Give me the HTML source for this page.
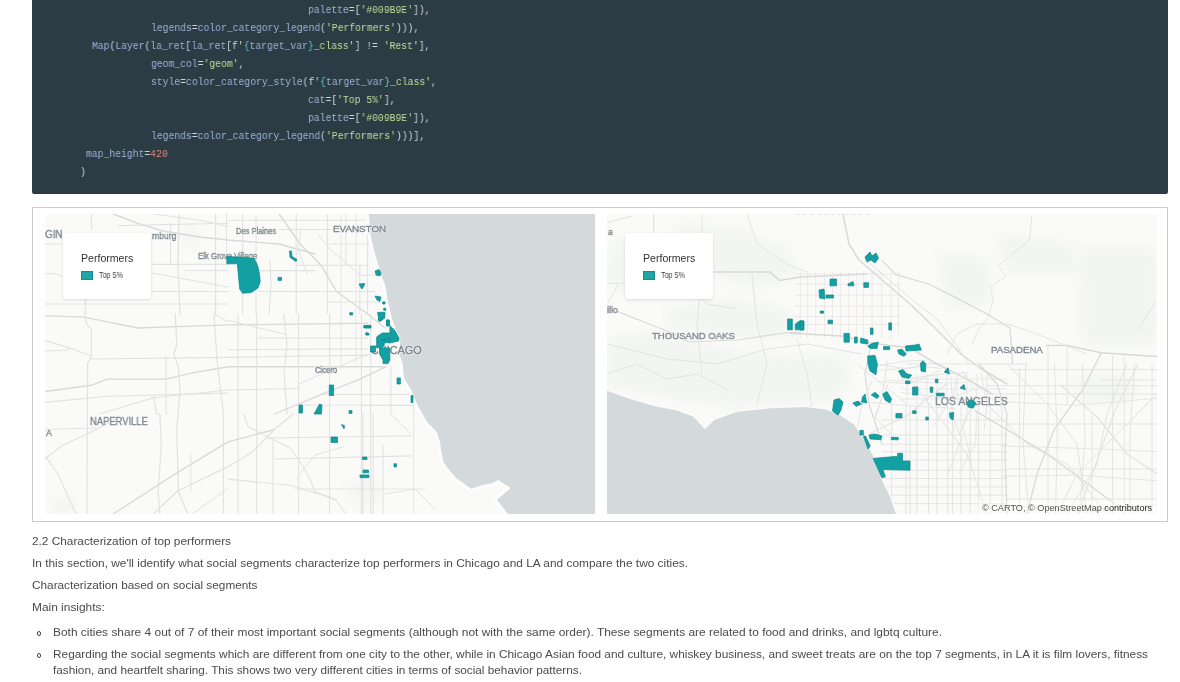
<!DOCTYPE html><html><head><meta charset="utf-8"><style>
html,body{margin:0;padding:0;background:#fff;width:1180px;height:682px;overflow:hidden;position:relative}
.code{position:absolute;left:32px;top:-10px;width:1136px;height:204px;background:#2c3c44;border-radius:0 0 2px 2px}
.cl{position:absolute;font-family:"Liberation Mono",monospace;font-size:10.5px;white-space:pre;color:#9db1d8;line-height:18px;will-change:transform;transform:scaleX(0.9255);transform-origin:0 0;margin-left:0.5px;margin-top:-0.3px}
.s{color:#c2dc98}.p{color:#cfd6dc}.b{color:#5fc7c0}.n{color:#e4877a}
.frame{position:absolute;left:32px;top:207px;width:1134px;height:313px;border:1px solid #cbcbcb}
.map{position:absolute;top:214px;width:550px;height:300px;overflow:hidden;background:#f6f7f5}
.map svg{display:block}
.ti{position:absolute;white-space:pre;line-height:1;transform-origin:0 0;will-change:transform}
.leg{position:absolute;background:#fff;border-radius:3px;box-shadow:0 1px 3px rgba(0,0,0,0.13)}
.sw{position:absolute;background:#22a3a5;border:1px solid #1a8c8e;box-sizing:border-box}
</style></head><body><div class="code"></div>
<div class="cl" style="left:307.5px;top:1.5px">palette<span class="p">=[</span><span class="s">'#009B9E'</span><span class="p">]),</span></div>
<div class="cl" style="left:150px;top:19.5px">legends<span class="p">=</span>color_category_legend<span class="p">(</span><span class="s">'Performers'</span><span class="p">))),</span></div>
<div class="cl" style="left:91px;top:37.5px">Map<span class="p">(</span>Layer<span class="p">(</span>la_ret<span class="p">[</span>la_ret<span class="p">[f</span><span class="s">'</span><span class="b">{</span>target_var<span class="b">}</span><span class="s">_class'</span><span class="p">] != </span><span class="s">'Rest'</span><span class="p">],</span></div>
<div class="cl" style="left:150px;top:55.5px">geom_col<span class="p">=</span><span class="s">'geom'</span><span class="p">,</span></div>
<div class="cl" style="left:150px;top:73.5px">style<span class="p">=</span>color_category_style<span class="p">(f</span><span class="s">'</span><span class="b">{</span>target_var<span class="b">}</span><span class="s">_class'</span><span class="p">,</span></div>
<div class="cl" style="left:307.5px;top:91.5px">cat<span class="p">=[</span><span class="s">'Top 5%'</span><span class="p">],</span></div>
<div class="cl" style="left:307.5px;top:109.5px">palette<span class="p">=[</span><span class="s">'#009B9E'</span><span class="p">]),</span></div>
<div class="cl" style="left:150px;top:127.5px">legends<span class="p">=</span>color_category_legend<span class="p">(</span><span class="s">'Performers'</span><span class="p">)))],</span></div>
<div class="cl" style="left:85px;top:145.5px">map_height<span class="p">=</span><span class="n">420</span></div>
<div class="cl p" style="left:79px;top:163.5px">)</div>
<div class="frame"></div><div class="map" style="left:45px"><svg width="550" height="300" viewBox="0 0 550 300"><rect width="550" height="300" fill="#fafaf9"/><defs><filter id="bl1" x="-30%" y="-30%" width="160%" height="160%"><feGaussianBlur stdDeviation="4"/></filter></defs><g fill="#eef1ee" filter="url(#bl1)" opacity="0.5"><polygon points="8.0,285.0 30.0,280.0 30.0,300.0 8.0,300.0"/><polygon points="138.0,14.0 152.0,12.0 154.0,32.0 140.0,34.0"/><polygon points="300.0,270.0 330.0,262.0 340.0,285.0 310.0,292.0"/></g><defs><filter id="rb1" x="-5%" y="-5%" width="110%" height="110%"><feGaussianBlur stdDeviation="0.45"/></filter></defs><g fill="none" stroke="#e2e2e2" stroke-linejoin="round" stroke-linecap="round" filter="url(#rb1)"><polyline points="68.0,0.0 93.0,9.3 118.0,17.0 155.0,23.0 183.0,26.0 234.0,30.0 270.0,40.0" stroke-width="1.4" stroke="#d9d9d9"/><polyline points="73.0,11.6 183.0,9.3" stroke-width="1.1"/><polyline points="108.6,0.0 155.0,6.2 183.0,12.4" stroke-width="1.1"/><polyline points="125.6,9.0 125.6,51.0" stroke-width="1.1"/><polyline points="134.0,0.0 133.0,50.0 135.0,100.0" stroke-width="1.3"/><polyline points="170.6,0.0 170.6,100.0" stroke-width="1.2"/><polyline points="181.5,0.0 181.5,42.0" stroke-width="1.0"/><polyline points="40.3,84.0 40.3,100.0" stroke-width="1.1"/><polyline points="46.5,0.0 46.5,15.5" stroke-width="1.1"/><polyline points="107.0,50.4 183.0,50.4" stroke-width="1.1"/><polyline points="140.0,56.6 183.0,56.6" stroke-width="1.0"/><polyline points="107.0,59.0 183.0,73.0" stroke-width="1.1"/><polyline points="107.0,77.5 183.0,77.5" stroke-width="1.1"/><polyline points="0.0,90.0 183.0,90.0" stroke-width="0.9"/><polyline points="0.0,30.0 17.0,30.0" stroke-width="1.0"/><polyline points="0.0,60.0 9.3,59.7 17.0,62.0" stroke-width="1.0"/><polyline points="183.0,6.2 322.6,6.2" stroke-width="1.1"/><polyline points="234.0,15.5 322.6,15.5" stroke-width="1.1"/><polyline points="251.0,51.2 322.6,51.2" stroke-width="1.1"/><polyline points="214.0,56.6 269.8,56.6" stroke-width="1.1"/><polyline points="214.0,77.5 330.0,77.5" stroke-width="1.2"/><polyline points="314.0,61.3 330.0,61.3" stroke-width="1.0"/><polyline points="197.7,0.0 197.7,100.0" stroke-width="1.1"/><polyline points="211.0,0.0 211.0,100.0" stroke-width="1.1"/><polyline points="251.2,0.0 251.2,100.0" stroke-width="1.1"/><polyline points="282.3,0.0 282.3,100.0" stroke-width="1.1"/><polyline points="322.6,0.0 322.6,100.0" stroke-width="1.1"/><polyline points="224.9,46.0 226.0,70.0 224.0,100.0" stroke-width="1.1"/><polyline points="300.9,0.0 300.9,51.0" stroke-width="1.0"/><polyline points="314.8,51.0 314.8,100.0" stroke-width="1.0"/><polyline points="234.2,0.0 255.9,31.0 276.0,51.2 291.6,77.5 322.6,100.0 340.0,114.0" stroke-width="1.4" stroke="#d9d9d9"/><polyline points="273.0,20.0 285.4,35.7 314.8,60.5" stroke-width="1.0"/><polyline points="255.9,15.0 253.0,35.0 262.0,60.0" stroke-width="1.0"/><polyline points="0.0,101.6 38.8,103.1 93.0,114.0 183.0,110.9 322.6,109.3" stroke-width="1.4" stroke="#d9d9d9"/><polyline points="0.0,126.4 24.8,134.1 46.5,141.9" stroke-width="1.1"/><polyline points="0.0,137.2 24.8,135.7" stroke-width="1.0"/><polyline points="46.5,145.0 183.0,143.4 322.6,141.1" stroke-width="1.1"/><polyline points="0.0,177.5 46.5,171.3 62.0,165.1 121.0,165.1 147.3,158.9 183.0,152.7 338.0,152.7" stroke-width="1.4" stroke="#d9d9d9"/><polyline points="0.0,188.4 62.0,182.2 183.0,179.1" stroke-width="1.1"/><polyline points="54.3,200.0 93.0,188.4 108.6,183.7 183.0,176.0 254.0,174.5" stroke-width="1.1"/><polyline points="39.5,100.0 41.9,110.9 46.5,115.5 46.5,141.9 42.6,149.6 41.9,300.0" stroke-width="1.2"/><polyline points="130.3,100.0 131.8,131.0 128.7,140.3 133.4,152.7 135.0,177.5 133.0,200.0 131.8,215.5 133.4,277.5 142.7,300.0" stroke-width="1.3"/><polyline points="121.0,141.9 121.0,200.0 122.5,200.0" stroke-width="1.0"/><polyline points="108.6,182.2 111.7,200.0 114.8,200.0 116.3,231.0 113.2,277.5 114.8,300.0" stroke-width="1.2"/><polyline points="169.0,100.0 172.0,146.5 178.4,200.0 178.4,300.0" stroke-width="1.2"/><polyline points="169.0,100.0 183.0,107.8" stroke-width="1.0"/><polyline points="214.0,124.0 322.6,124.0" stroke-width="1.0"/><polyline points="183.0,135.7 322.6,134.9" stroke-width="1.1"/><polyline points="279.0,180.6 366.0,180.6" stroke-width="1.0"/><polyline points="318.0,191.5 366.0,191.5" stroke-width="1.0"/><polyline points="193.0,100.0 193.0,300.0" stroke-width="1.1"/><polyline points="211.7,100.0 211.7,300.0" stroke-width="1.1"/><polyline points="253.6,100.0 253.6,300.0" stroke-width="1.1"/><polyline points="284.6,100.0 284.6,300.0" stroke-width="1.1"/><polyline points="316.4,100.0 316.4,300.0" stroke-width="1.1"/><polyline points="325.7,100.0 325.7,300.0" stroke-width="1.1"/><polyline points="238.8,100.0 242.0,130.0 239.0,160.0 242.0,200.0" stroke-width="1.2"/><polyline points="345.8,152.0 345.8,200.0" stroke-width="1.0"/><polyline points="183.0,106.2 214.0,114.0 240.4,120.2" stroke-width="1.1"/><polyline points="254.3,169.8 314.8,143.4 338.0,135.7" stroke-width="1.0"/><polyline points="229.5,200.0 276.0,180.6 314.8,165.1 341.2,152.7" stroke-width="1.3" stroke="#d9d9d9"/><polyline points="0.0,215.5 51.2,214.0" stroke-width="1.0"/><polyline points="0.0,245.0 15.5,232.6 51.2,215.5 70.0,205.0" stroke-width="1.1"/><polyline points="0.0,241.9 12.4,258.9 31.0,300.0" stroke-width="1.1"/><polyline points="68.2,300.0 131.8,258.9 183.0,227.9 229.5,215.5" stroke-width="1.3" stroke="#d9d9d9"/><polyline points="108.6,300.0 131.8,277.5 183.0,252.7 206.3,238.8 229.5,215.5 248.1,200.0" stroke-width="1.3"/><polyline points="147.3,300.0 183.0,274.4" stroke-width="1.0"/><polyline points="145.8,240.0 145.8,277.0" stroke-width="0.9"/><polyline points="221.8,224.0 366.0,221.7" stroke-width="1.1"/><polyline points="229.5,245.0 366.0,241.9" stroke-width="1.1"/><polyline points="183.0,265.1 245.0,271.3 276.0,280.6 291.6,286.8 300.9,300.0" stroke-width="1.1"/><polyline points="198.5,200.0 203.0,212.4 226.4,224.8 245.0,234.0 254.3,246.5 263.6,262.0 269.8,277.5 290.0,285.0" stroke-width="1.1"/><polyline points="228.0,224.0 228.0,300.0" stroke-width="1.0"/><polyline points="318.0,200.0 318.0,300.0" stroke-width="1.1"/><polyline points="328.0,200.0 328.0,300.0" stroke-width="1.1"/><polyline points="338.0,231.0 338.0,300.0" stroke-width="1.0"/><polyline points="345.8,200.0 366.0,220.0" stroke-width="1.0"/><polyline points="251.0,265.0 270.0,241.0 299.0,232.6" stroke-width="1.0"/><polyline points="340.0,280.0 370.0,275.0 390.0,295.0" stroke-width="1.0"/><polyline points="282.0,30.0 336.0,30.0" stroke-width="0.9"/><polyline points="282.0,88.0 336.0,88.0" stroke-width="0.9"/><polyline points="296.0,0.0 296.0,150.0" stroke-width="0.8"/><polyline points="311.0,0.0 311.0,150.0" stroke-width="0.8"/><polyline points="368.7,150.0 368.7,300.0" stroke-width="0.9"/><polyline points="250.0,191.2 380.0,191.2" stroke-width="0.9"/><polyline points="250.0,275.0 380.0,275.0" stroke-width="0.9"/></g><polygon points="323.9,0.0 325.1,18.6 328.6,35.0 332.0,46.6 336.3,61.4 340.4,71.7 342.5,85.0 346.6,103.5 350.7,116.0 355.4,123.5 354.2,139.8 357.7,150.0 358.9,164.0 365.9,175.6 372.9,192.0 382.2,208.3 391.5,217.6 395.0,228.0 396.0,236.0 398.5,247.9 401.8,253.0 411.0,264.0 426.0,274.8 438.4,270.7 446.5,269.4 453.3,266.0 465.5,274.0 452.0,285.7 462.8,300.0 550.0,300.0 550.0,0.0" fill="#d4dadc" stroke="#fdfdfd" stroke-width="6" stroke-linejoin="round"/><polygon points="323.9,0.0 325.1,18.6 328.6,35.0 332.0,46.6 336.3,61.4 340.4,71.7 342.5,85.0 346.6,103.5 350.7,116.0 355.4,123.5 354.2,139.8 357.7,150.0 358.9,164.0 365.9,175.6 372.9,192.0 382.2,208.3 391.5,217.6 395.0,228.0 396.0,236.0 398.5,247.9 401.8,253.0 411.0,264.0 426.0,274.8 438.4,270.7 446.5,269.4 453.3,266.0 465.5,274.0 452.0,285.7 462.8,300.0 550.0,300.0 550.0,0.0" fill="#d4dadc"/></svg></div><div class="map" style="left:607px"><svg width="550" height="300" viewBox="0 0 550 300"><rect width="550" height="300" fill="#fafaf9"/><defs><filter id="bl2" x="-20%" y="-20%" width="140%" height="140%"><feGaussianBlur stdDeviation="6"/></filter></defs><g fill="#e5ece5" filter="url(#bl2)" opacity="0.35"><polygon points="0.0,125.0 40.0,118.0 90.0,128.0 140.0,140.0 190.0,142.0 235.0,140.0 245.0,165.0 230.0,185.0 180.0,190.0 120.0,193.0 60.0,183.0 0.0,172.0"/><polygon points="60.0,95.0 120.0,85.0 170.0,92.0 200.0,110.0 170.0,125.0 110.0,120.0 60.0,112.0"/><polygon points="70.0,10.0 130.0,15.0 180.0,35.0 190.0,60.0 150.0,75.0 100.0,60.0 60.0,40.0"/><polygon points="330.0,40.0 380.0,45.0 385.0,90.0 340.0,95.0"/><polygon points="475.0,35.0 550.0,35.0 550.0,130.0 475.0,130.0"/><polygon points="390.0,20.0 470.0,30.0 470.0,60.0 400.0,60.0"/><polygon points="460.0,165.0 500.0,160.0 530.0,170.0 520.0,190.0 480.0,188.0"/><polygon points="5.0,30.0 40.0,25.0 60.0,60.0 30.0,80.0 0.0,70.0"/></g><defs><filter id="rb2" x="-5%" y="-5%" width="110%" height="110%"><feGaussianBlur stdDeviation="0.45"/></filter></defs><g fill="none" stroke="#e2e2e2" stroke-linejoin="round" stroke-linecap="round" filter="url(#rb2)"><polyline points="193.3,58.0 193.3,124.0" stroke-width="0.7" stroke="#e6e4e4"/><polyline points="200.6,58.0 200.6,124.0" stroke-width="0.7" stroke="#e6e4e4"/><polyline points="208.7,58.0 208.7,124.0" stroke-width="0.7" stroke="#e6e4e4"/><polyline points="217.5,58.0 217.5,124.0" stroke-width="0.7" stroke="#e6e4e4"/><polyline points="225.5,58.0 225.5,124.0" stroke-width="0.7" stroke="#e6e4e4"/><polyline points="233.6,58.0 233.6,124.0" stroke-width="0.7" stroke="#e6e4e4"/><polyline points="241.7,58.0 241.7,124.0" stroke-width="0.7" stroke="#e6e4e4"/><polyline points="249.7,58.0 249.7,124.0" stroke-width="0.7" stroke="#e6e4e4"/><polyline points="256.3,58.0 256.3,124.0" stroke-width="0.7" stroke="#e6e4e4"/><polyline points="265.1,58.0 265.1,124.0" stroke-width="0.7" stroke="#e6e4e4"/><polyline points="274.7,58.0 274.7,124.0" stroke-width="0.7" stroke="#e6e4e4"/><polyline points="284.2,58.0 284.2,124.0" stroke-width="0.7" stroke="#e6e4e4"/><polyline points="291.5,58.0 291.5,124.0" stroke-width="0.7" stroke="#e6e4e4"/><polyline points="188.0,60.0 294.0,60.0" stroke-width="0.7" stroke="#e6e4e4"/><polyline points="188.0,70.2 294.0,70.2" stroke-width="0.7" stroke="#e6e4e4"/><polyline points="188.0,81.2 294.0,81.2" stroke-width="0.7" stroke="#e6e4e4"/><polyline points="188.0,92.2 294.0,92.2" stroke-width="0.7" stroke="#e6e4e4"/><polyline points="188.0,102.5 294.0,102.5" stroke-width="0.7" stroke="#e6e4e4"/><polyline points="188.0,110.5 294.0,110.5" stroke-width="0.7" stroke="#e6e4e4"/><polyline points="284.7,190.0 284.7,300.0" stroke-width="0.9"/><polyline points="298.9,190.0 298.9,300.0" stroke-width="0.9"/><polyline points="303.1,190.0 303.1,300.0" stroke-width="0.9"/><polyline points="309.8,190.0 309.8,300.0" stroke-width="0.9"/><polyline points="321.5,190.0 321.5,300.0" stroke-width="0.9"/><polyline points="329.8,190.0 329.8,300.0" stroke-width="0.9"/><polyline points="340.7,190.0 340.7,300.0" stroke-width="0.9"/><polyline points="345.7,190.0 345.7,300.0" stroke-width="0.9"/><polyline points="354.0,190.0 354.0,300.0" stroke-width="0.9"/><polyline points="363.2,190.0 363.2,300.0" stroke-width="0.9"/><polyline points="371.6,190.0 371.6,300.0" stroke-width="0.9"/><polyline points="383.3,190.0 383.3,300.0" stroke-width="0.9"/><polyline points="395.0,190.0 395.0,300.0" stroke-width="0.9"/><polyline points="275.0,206.0 400.0,206.0" stroke-width="0.9"/><polyline points="275.0,221.0 400.0,221.0" stroke-width="0.9"/><polyline points="275.0,230.3 400.0,230.3" stroke-width="0.9"/><polyline points="275.0,237.8 400.0,237.8" stroke-width="0.9"/><polyline points="275.0,246.1 400.0,246.1" stroke-width="0.9"/><polyline points="275.0,256.2 400.0,256.2" stroke-width="0.9"/><polyline points="275.0,264.5 400.0,264.5" stroke-width="0.9"/><polyline points="275.0,272.9 400.0,272.9" stroke-width="0.9"/><polyline points="275.0,281.2 400.0,281.2" stroke-width="0.9"/><polyline points="275.0,289.6 400.0,289.6" stroke-width="0.9"/><polyline points="412.5,155.0 412.5,300.0" stroke-width="0.9"/><polyline points="441.0,131.0 441.0,300.0" stroke-width="0.9"/><polyline points="460.2,131.0 460.2,190.0" stroke-width="0.9"/><polyline points="505.6,142.0 505.6,300.0" stroke-width="0.9"/><polyline points="517.3,142.0 517.3,300.0" stroke-width="0.9"/><polyline points="485.0,200.0 485.0,300.0" stroke-width="0.9"/><polyline points="545.0,150.0 545.0,300.0" stroke-width="0.9"/><polyline points="403.0,155.6 550.0,155.6" stroke-width="0.9"/><polyline points="380.0,171.7 550.0,171.7" stroke-width="0.9"/><polyline points="380.0,180.0 550.0,180.0" stroke-width="0.9"/><polyline points="494.0,166.0 550.0,166.0" stroke-width="0.9"/><polyline points="400.0,210.0 550.0,210.0" stroke-width="0.9"/><polyline points="400.0,255.0 550.0,255.0" stroke-width="0.9"/><polyline points="400.0,285.0 550.0,285.0" stroke-width="0.9"/><polyline points="300.0,150.0 420.0,150.0" stroke-width="0.9"/><polyline points="300.0,160.0 300.0,190.0" stroke-width="0.8"/><polyline points="310.0,160.0 310.0,190.0" stroke-width="0.8"/><polyline points="320.0,160.0 320.0,190.0" stroke-width="0.8"/><polyline points="330.0,160.0 330.0,190.0" stroke-width="0.8"/><polyline points="340.0,160.0 340.0,190.0" stroke-width="0.8"/><polyline points="350.0,160.0 350.0,190.0" stroke-width="0.8"/><polyline points="360.0,160.0 360.0,190.0" stroke-width="0.8"/><polyline points="370.0,160.0 370.0,190.0" stroke-width="0.8"/><polyline points="380.0,160.0 380.0,190.0" stroke-width="0.8"/><polyline points="295.0,165.0 400.0,165.0" stroke-width="0.8"/><polyline points="295.0,175.0 400.0,175.0" stroke-width="0.8"/><polyline points="295.0,185.0 400.0,185.0" stroke-width="0.8"/><polyline points="0.0,8.5 25.0,2.0" stroke-width="1.0"/><polyline points="11.6,70.0 4.6,82.0 1.0,89.0" stroke-width="1.0"/><polyline points="46.6,0.0 46.6,18.6" stroke-width="1.2"/><polyline points="0.0,69.3 23.0,69.3" stroke-width="1.1"/><polyline points="107.0,58.0 163.0,58.0 172.5,66.4 193.0,63.0 260.0,60.0" stroke-width="1.5" stroke="#d9d9d9"/><polyline points="183.0,119.3 212.3,120.8 238.7,122.3 256.3,128.1 303.0,134.0 330.0,150.0 360.0,165.0 385.0,180.0" stroke-width="1.5" stroke="#d9d9d9"/><polyline points="236.0,0.0 242.0,30.0 252.0,46.0 303.0,90.0 326.0,112.0 354.0,140.0 373.0,154.0 400.0,170.0" stroke-width="1.5" stroke="#d9d9d9"/><polyline points="259.0,46.0 303.0,84.0 330.0,105.0" stroke-width="1.0"/><polyline points="425.0,0.0 422.5,26.0 405.0,40.0 391.3,52.0 399.0,62.4 383.5,72.8 386.0,85.8 381.0,104.0 372.0,115.0 365.0,130.0" stroke-width="0.9"/><polyline points="275.0,46.6 289.0,60.6 321.6,70.0 345.0,81.6 380.0,100.0 403.0,114.0 405.5,150.0" stroke-width="1.3" stroke="#d9d9d9"/><polyline points="439.6,131.4 460.2,131.4 493.9,138.7 550.0,142.4" stroke-width="1.5" stroke="#d9d9d9"/><polyline points="493.9,139.5 476.3,174.6 447.0,216.0 430.0,260.0 420.0,300.0" stroke-width="1.3" stroke="#d9d9d9"/><polyline points="454.3,171.7 491.0,204.0 520.0,240.0 550.0,260.0" stroke-width="1.2"/><polyline points="531.0,116.5 547.7,88.6" stroke-width="1.0"/><polyline points="368.0,196.6 438.0,238.6 508.0,290.0" stroke-width="1.3" stroke="#d9d9d9"/><polyline points="470.8,300.0 508.0,196.6 531.0,150.0" stroke-width="1.1"/><polyline points="0.0,93.0 23.0,102.5 65.0,119.0 81.6,128.0 130.5,126.0 177.0,119.0 193.0,118.0" stroke-width="1.2" stroke="#d9d9d9"/><polyline points="0.0,130.0 60.0,145.0 110.0,150.0 160.0,135.0 200.0,130.0 255.0,140.0" stroke-width="1.0"/><polyline points="95.0,0.0 95.0,60.0 90.0,110.0 95.0,160.0" stroke-width="0.9"/><polyline points="145.0,60.0 150.0,110.0 160.0,150.0 150.0,190.0" stroke-width="0.9"/><polyline points="190.0,125.0 200.0,160.0 205.0,193.0" stroke-width="0.9"/><polyline points="263.0,135.0 258.0,160.0 262.0,190.0 275.0,230.0" stroke-width="1.2" stroke="#d9d9d9"/><polyline points="263.0,219.4 301.4,201.0 318.0,186.0 340.0,170.0" stroke-width="1.1"/><polyline points="340.0,140.0 350.0,120.0 370.0,110.0 400.0,110.0 430.0,120.0 480.0,140.0" stroke-width="0.9"/><polyline points="250.0,150.0 275.0,170.0 300.0,190.0" stroke-width="0.9"/><polyline points="418.9,150.0 415.8,225.0 421.8,300.0" stroke-width="0.9"/><polyline points="447.4,150.0 450.4,225.0 448.4,300.0" stroke-width="0.9"/><polyline points="475.3,150.0 478.1,225.0 472.4,300.0" stroke-width="0.9"/><polyline points="527.6,150.0 522.8,225.0 523.1,300.0" stroke-width="0.9"/><polyline points="395.0,187.7 470.0,191.3 550.0,184.2" stroke-width="0.9"/><polyline points="395.0,231.9 470.0,234.3 550.0,237.5" stroke-width="0.9"/><polyline points="395.0,262.3 470.0,261.0 550.0,266.8" stroke-width="0.9"/><polyline points="395.0,291.2 470.0,296.6 550.0,290.9" stroke-width="0.9"/><polyline points="280.5,147.1 274.7,183.4 267.7,206.6" stroke-width="0.9"/><polyline points="343.8,162.3 345.2,183.6 326.2,212.5" stroke-width="0.9"/><polyline points="349.1,165.7 343.5,197.4 347.2,218.1" stroke-width="0.9"/><polyline points="363.7,181.9 356.0,213.4 364.7,248.8" stroke-width="0.9"/><polyline points="355.4,157.3 369.8,179.6 352.1,221.2" stroke-width="0.9"/><polyline points="281.5,169.3 267.6,202.7 292.0,228.7" stroke-width="0.9"/><polyline points="374.1,158.8 379.9,190.7 377.3,215.2" stroke-width="0.9"/><polyline points="369.5,196.7 368.7,230.0 351.9,259.2" stroke-width="0.9"/><polyline points="344.8,199.6 354.5,225.3 340.3,261.3" stroke-width="0.9"/><polyline points="264.9,167.7 254.9,190.0 247.2,231.9" stroke-width="0.9"/><polyline points="262.4,149.1 300.2,155.0 325.6,147.8" stroke-width="0.9"/><polyline points="294.2,178.5 340.6,184.3 365.3,176.4" stroke-width="0.9"/><polyline points="294.2,165.1 343.4,159.5 361.3,158.7" stroke-width="0.9"/><polyline points="274.2,156.3 316.0,152.5 334.4,154.4" stroke-width="0.9"/><polyline points="278.3,165.8 327.4,168.9 358.9,168.7" stroke-width="0.9"/><polyline points="252.7,187.3 300.7,191.8 347.7,194.5" stroke-width="0.9"/><polyline points="269.9,167.5 302.0,169.6 332.4,157.1" stroke-width="0.9"/><polyline points="258.1,154.6 294.9,147.5 318.1,146.2" stroke-width="0.9"/><polyline points="300.0,160.0 330.0,200.0 360.0,240.0 380.0,300.0" stroke-width="1.0"/><polyline points="380.0,190.0 420.0,230.0 460.0,250.0 500.0,300.0" stroke-width="1.0"/><polyline points="400.0,150.0 440.0,190.0 470.0,230.0 480.0,300.0" stroke-width="1.0"/><polyline points="520.0,150.0 500.0,200.0 490.0,250.0 460.0,300.0" stroke-width="1.0"/><polyline points="550.0,180.0 510.0,220.0 470.0,260.0 450.0,300.0" stroke-width="1.0"/><polyline points="372.0,150.0 390.0,170.0 400.0,200.0 398.0,240.0 400.0,300.0" stroke-width="1.2" stroke="#d9d9d9"/><polyline points="330.0,105.0 345.0,125.0 362.0,150.0" stroke-width="0.9"/><polyline points="0.0,160.0 30.0,150.0 60.0,165.0 90.0,160.0 120.0,175.0" stroke-width="0.9"/><polyline points="20.0,60.0 50.0,80.0 75.0,70.0 100.0,90.0 130.0,95.0" stroke-width="0.9"/><polyline points="140.0,0.0 150.0,30.0 180.0,50.0 200.0,58.0" stroke-width="0.9"/></g><polygon points="0.0,176.8 23.3,185.0 46.6,192.0 70.0,196.6 86.2,202.4 97.9,215.3 107.2,205.9 130.5,197.8 163.0,194.3 198.0,193.0 219.0,195.4 233.0,201.3 247.0,210.6 256.3,224.6 265.7,240.9 270.3,252.5 275.0,266.5 282.0,280.5 289.0,300.0 0.0,300.0" fill="#d4dadc" stroke="#fbfbfb" stroke-width="2"/><polygon points="0.0,176.8 23.3,185.0 46.6,192.0 70.0,196.6 86.2,202.4 97.9,215.3 107.2,205.9 130.5,197.8 163.0,194.3 198.0,193.0 219.0,195.4 233.0,201.3 247.0,210.6 256.3,224.6 265.7,240.9 270.3,252.5 275.0,266.5 282.0,280.5 289.0,300.0 0.0,300.0" fill="#d4dadc"/></svg></div><div class="ti" style="left:332.8px;top:224.07px;font-size:9.6px;font-weight:normal;font-family:'Liberation Sans',sans-serif;color:#7d868d;transform:scaleX(1.0252);-webkit-text-stroke:0.35px #7d868d;text-shadow:0 0 2px #fff,0 0 2px #fff;">EVANSTON</div><div class="ti" style="left:370.8px;top:344.51px;font-size:10.5px;font-weight:normal;font-family:'Liberation Sans',sans-serif;color:#7d868d;transform:scaleX(1.0323);-webkit-text-stroke:0.35px #7d868d;text-shadow:0 0 2px #fff,0 0 2px #fff;">CHICAGO</div><div class="ti" style="left:90.4px;top:417.08px;font-size:10.3px;font-weight:normal;font-family:'Liberation Sans',sans-serif;color:#7d868d;transform:scaleX(0.9125);-webkit-text-stroke:0.35px #7d868d;text-shadow:0 0 2px #fff,0 0 2px #fff;">NAPERVILLE</div><div class="ti" style="left:46.2px;top:428.91px;font-size:9.2px;font-weight:normal;font-family:'Liberation Sans',sans-serif;color:#7d868d;transform:scaleX(0.9445);-webkit-text-stroke:0.35px #7d868d;text-shadow:0 0 2px #fff,0 0 2px #fff;">A</div><div class="ti" style="left:45px;top:229.11px;font-size:10.5px;font-weight:normal;font-family:'Liberation Sans',sans-serif;color:#7d868d;transform:scaleX(0.9372);-webkit-text-stroke:0.35px #7d868d;text-shadow:0 0 2px #fff,0 0 2px #fff;">GIN</div><div class="ti" style="left:151.7px;top:232.48px;font-size:9px;font-weight:normal;font-family:'Liberation Sans',sans-serif;color:#7d868d;transform:scaleX(0.9524);-webkit-text-stroke:0.35px #7d868d;text-shadow:0 0 2px #fff,0 0 2px #fff;">mburg</div><div class="ti" style="left:236px;top:226.52px;font-size:8.6px;font-weight:normal;font-family:'Liberation Sans',sans-serif;color:#7d868d;transform:scaleX(0.8766);-webkit-text-stroke:0.35px #7d868d;text-shadow:0 0 2px #fff,0 0 2px #fff;">Des Plaines</div><div class="ti" style="left:198.3px;top:250.74px;font-size:9.4px;font-weight:normal;font-family:'Liberation Sans',sans-serif;color:#7d868d;transform:scaleX(0.8251);-webkit-text-stroke:0.35px #7d868d;text-shadow:0 0 2px #fff,0 0 2px #fff;">Elk Grove Village</div><div class="ti" style="left:315.3px;top:365.79px;font-size:8.4px;font-weight:normal;font-family:'Liberation Sans',sans-serif;color:#7d868d;transform:scaleX(0.9172);-webkit-text-stroke:0.35px #7d868d;text-shadow:0 0 2px #fff,0 0 2px #fff;">Cicero</div><div class="ti" style="left:652.4px;top:331.27px;font-size:9.6px;font-weight:normal;font-family:'Liberation Sans',sans-serif;color:#7d868d;transform:scaleX(0.9955);-webkit-text-stroke:0.35px #7d868d;text-shadow:0 0 2px #fff,0 0 2px #fff;">THOUSAND OAKS</div><div class="ti" style="left:607.5px;top:227.98px;font-size:9px;font-weight:normal;font-family:'Liberation Sans',sans-serif;color:#7d868d;transform:scaleX(0.9171);-webkit-text-stroke:0.35px #7d868d;text-shadow:0 0 2px #fff,0 0 2px #fff;">a</div><div class="ti" style="left:607px;top:305.04px;font-size:9.4px;font-weight:normal;font-family:'Liberation Sans',sans-serif;color:#7d868d;transform:scaleX(0.9417);-webkit-text-stroke:0.35px #7d868d;text-shadow:0 0 2px #fff,0 0 2px #fff;">illo</div><div class="ti" style="left:991px;top:344.57px;font-size:9.6px;font-weight:normal;font-family:'Liberation Sans',sans-serif;color:#7d868d;transform:scaleX(1.0049);-webkit-text-stroke:0.35px #7d868d;text-shadow:0 0 2px #fff,0 0 2px #fff;">PASADENA</div><div class="ti" style="left:935px;top:396.41px;font-size:11.8px;font-weight:normal;font-family:'Liberation Sans',sans-serif;color:#7d868d;transform:scaleX(0.8881);-webkit-text-stroke:0.35px #7d868d;text-shadow:0 0 2px #fff,0 0 2px #fff;">LOS ANGELES</div><div class="map" style="left:45px;background:none"><svg width="550" height="300" viewBox="0 0 550 300"><g fill="#12a0a3" stroke="#0d8789" stroke-width="0.7" stroke-linejoin="round"><polygon points="181.8,42.5 198.0,43.3 208.8,44.5 211.1,48.0 212.9,52.8 214.6,60.4 215.2,68.0 212.9,74.0 206.4,78.6 197.6,79.2 194.7,75.1 192.3,49.8 181.8,49.8"/><polygon points="244.5,37.0 246.5,37.0 247.0,42.5 252.0,45.5 251.0,47.5 245.0,43.5"/><rect x="233.0" y="63.4" width="3.5" height="3.0"/><polygon points="330.0,57.0 334.0,55.5 336.0,59.0 335.0,62.0 331.0,61.0"/><polygon points="314.0,70.0 319.7,69.4 319.0,72.0 317.0,75.0 315.5,73.0"/><polygon points="330.0,82.0 336.0,83.0 335.0,87.4 332.0,86.0"/><rect x="338.0" y="88.0" width="2.0" height="1.7"/><rect x="304.8" y="98.6" width="2.8" height="2.4"/><polygon points="333.0,106.0 336.0,100.0 340.0,99.0 339.0,104.0 336.0,107.0"/><rect x="341.4" y="106.0" width="3.0" height="6.0"/><rect x="318.8" y="111.4" width="7.0" height="2.6"/><rect x="321.0" y="119.3" width="3.0" height="1.7"/><polygon points="332.6,98.3 339.8,98.3 339.8,104.0 334.0,107.6"/><polygon points="341.8,106.0 343.9,106.0 343.9,111.7 341.8,111.7"/><polygon points="344.9,111.7 349.5,116.0 354.1,124.0 353.6,127.0 345.0,129.0 340.0,128.5 338.0,133.4 331.6,133.4 331.6,123.0 337.0,119.0 344.9,119.0"/><polygon points="336.7,126.0 344.9,124.0 344.9,128.0"/><polygon points="320.4,111.7 326.0,112.0 325.8,113.7 320.4,113.7"/><polygon points="334.6,134.0 344.9,134.0 344.9,146.0 343.0,149.6 338.0,149.6 338.0,146.0 335.0,141.0"/><rect x="325.4" y="132.0" width="5.1" height="6.0"/><rect x="352.0" y="164.0" width="3.4" height="6.0"/><rect x="284.3" y="171.0" width="4.2" height="10.5"/><rect x="366.0" y="181.5" width="2.0" height="7.0"/><rect x="254.0" y="191.0" width="3.5" height="8.0"/><polygon points="269.0,200.0 274.5,190.0 277.0,191.0 276.5,200.0"/><rect x="304.0" y="196.6" width="3.0" height="2.8"/><polygon points="296.4,210.6 299.5,211.5 299.0,214.8"/><rect x="286.0" y="223.0" width="6.5" height="5.5"/><rect x="317.4" y="243.0" width="4.6" height="2.5"/><rect x="349.0" y="249.7" width="2.4" height="3.3"/><rect x="318.0" y="256.0" width="5.5" height="2.8"/><rect x="315.0" y="261.0" width="9.0" height="2.7"/><rect x="338.7" y="94.2" width="2.1" height="2.1"/><rect x="337.7" y="88.0" width="2.1" height="2.0"/><rect x="320.8" y="118.8" width="2.0" height="2.1"/></g></svg></div><div class="map" style="left:607px;background:none"><svg width="550" height="300" viewBox="0 0 550 300"><g fill="#12a0a3" stroke="#0d8789" stroke-width="0.7" stroke-linejoin="round"><polygon points="258.0,43.0 263.0,38.0 265.0,42.0 269.0,39.0 271.5,44.0 268.0,49.0 264.0,46.0 260.0,48.0"/><rect x="223.0" y="65.0" width="6.5" height="6.8"/><polygon points="241.0,70.0 246.0,67.6 247.0,71.8 241.0,71.8"/><rect x="256.8" y="68.7" width="4.7" height="4.7"/><polygon points="212.0,76.0 217.0,75.0 218.0,85.0 212.5,84.0"/><rect x="219.0" y="81.0" width="7.5" height="3.0"/><rect x="213.2" y="97.0" width="3.5" height="2.2"/><rect x="221.0" y="106.2" width="4.5" height="3.5"/><rect x="180.6" y="105.0" width="4.7" height="10.8"/><polygon points="188.3,110.0 193.0,106.7 197.0,107.0 197.0,115.8 188.3,115.8"/><rect x="193.0" y="107.0" width="3.5" height="9.0"/><rect x="263.4" y="114.0" width="2.6" height="6.3"/><rect x="281.8" y="108.9" width="2.7" height="7.1"/><rect x="237.0" y="119.4" width="5.3" height="8.8"/><rect x="247.5" y="123.0" width="2.7" height="6.0"/><polygon points="253.7,124.0 260.7,126.0 260.7,130.0 253.7,129.0"/><polygon points="260.7,132.0 266.0,129.0 271.3,128.2 270.0,134.4 263.0,134.4"/><rect x="276.5" y="132.6" width="6.2" height="3.0"/><polygon points="290.6,136.0 295.0,135.3 299.4,140.0 297.0,142.3 292.0,140.0"/><polygon points="298.5,132.0 308.0,131.0 312.0,130.0 314.4,136.0 299.0,137.0"/><polygon points="260.7,142.0 268.0,141.4 270.4,150.0 269.0,160.8 263.0,157.0 261.0,150.0"/><polygon points="313.5,149.0 316.0,146.7 318.8,150.0 318.5,158.0 314.0,157.0"/><polygon points="291.5,157.0 296.0,155.5 300.0,160.0 304.7,161.0 302.0,164.3 295.0,163.0"/><rect x="298.5" y="167.0" width="4.5" height="2.6"/><rect x="328.4" y="165.2" width="2.6" height="3.5"/><polygon points="337.2,158.0 341.0,153.7 342.5,159.9"/><rect x="305.6" y="173.0" width="5.3" height="8.0"/><rect x="323.2" y="173.0" width="2.6" height="5.3"/><rect x="329.3" y="179.2" width="7.9" height="2.7"/><polygon points="353.0,174.0 357.0,170.4 358.3,175.7"/><polygon points="360.1,188.0 364.0,185.4 369.0,189.0 366.0,194.2 361.0,193.0"/><polygon points="227.0,186.0 232.0,184.5 236.0,188.0 234.0,196.0 231.0,201.2 225.5,197.0"/><polygon points="245.8,189.0 251.0,187.1 254.6,190.0 249.0,192.4"/><polygon points="255.5,183.0 258.0,180.1 259.8,188.9 254.6,188.0"/><polygon points="264.2,181.0 268.0,178.3 272.2,182.0 270.0,184.5"/><polygon points="275.7,180.0 280.0,177.5 284.5,185.0 283.0,188.9 278.0,186.0"/><rect x="288.9" y="199.5" width="6.1" height="4.4"/><rect x="305.6" y="196.8" width="3.5" height="2.7"/><rect x="318.8" y="203.0" width="2.6" height="3.0"/><polygon points="342.5,199.0 346.9,198.6 346.0,206.0 343.0,204.0"/><rect x="252.9" y="216.4" width="3.4" height="4.6"/><polygon points="256.3,222.0 258.5,222.0 263.3,232.0 261.0,235.0"/><polygon points="262.0,221.0 268.0,220.0 275.0,222.0 274.0,225.7 263.0,225.0"/><rect x="284.3" y="223.4" width="7.0" height="2.3"/><polygon points="266.1,244.4 290.7,242.2 290.7,239.3 295.5,239.3 295.5,247.0 303.0,247.0 303.0,256.2 275.8,255.5 278.4,262.8 274.9,263.7 268.3,249.2"/></g></svg></div><div style="position:absolute;left:796px;top:214px;width:74px;height:1.5px;background:repeating-linear-gradient(90deg,#d0d3d5 0 4px,transparent 4px 7px);opacity:0.5;height:1px"></div><div class="leg" style="left:63px;top:233px;width:87.5px;height:65.5px"></div><div class="ti" style="left:81px;top:253.11px;font-size:10.5px;font-weight:normal;font-family:'Liberation Sans',sans-serif;color:#333;transform:scaleX(1.0070);">Performers</div><div class="sw" style="left:81.2px;top:271.2px;width:12px;height:8.6px"></div><div class="ti" style="left:98.6px;top:271.49px;font-size:8.4px;font-weight:normal;font-family:'Liberation Sans',sans-serif;color:#3a3a3a;transform:scaleX(0.8591);">Top 5%</div><div class="leg" style="left:625px;top:233px;width:87.5px;height:65.5px"></div><div class="ti" style="left:643px;top:253.11px;font-size:10.5px;font-weight:normal;font-family:'Liberation Sans',sans-serif;color:#333;transform:scaleX(1.0070);">Performers</div><div class="sw" style="left:643.2px;top:271.2px;width:12px;height:8.6px"></div><div class="ti" style="left:660.6px;top:271.49px;font-size:8.4px;font-weight:normal;font-family:'Liberation Sans',sans-serif;color:#3a3a3a;transform:scaleX(0.8591);">Top 5%</div><div style="position:absolute;left:978px;top:501px;width:179px;height:13px;background:rgba(255,255,255,0.35)"></div><div class="ti" style="left:982.2px;top:503.90px;font-size:9.1px;font-weight:normal;font-family:'Liberation Sans',sans-serif;color:#505050;transform:scaleX(1.0050);">© CARTO, © OpenStreetMap <span style="color:#1e1e1e">contributors</span></div><div class="ti" style="left:32px;top:536.03px;font-size:10.6px;font-weight:normal;font-family:'Liberation Sans',sans-serif;color:#4b4b4b;transform:scaleX(1.1153);">2.2 Characterization of top performers</div><div class="ti" style="left:32px;top:558.03px;font-size:10.6px;font-weight:normal;font-family:'Liberation Sans',sans-serif;color:#4b4b4b;transform:scaleX(1.1214);">In this section, we'll identify what social segments characterize top performers in Chicago and LA and compare the two cities.</div><div class="ti" style="left:32px;top:580.03px;font-size:10.6px;font-weight:normal;font-family:'Liberation Sans',sans-serif;color:#4b4b4b;transform:scaleX(1.1132);">Characterization based on social segments</div><div class="ti" style="left:32px;top:602.23px;font-size:10.6px;font-weight:normal;font-family:'Liberation Sans',sans-serif;color:#4b4b4b;transform:scaleX(1.1238);">Main insights:</div><div class="ti" style="left:53px;top:627.33px;font-size:10.6px;font-weight:normal;font-family:'Liberation Sans',sans-serif;color:#4b4b4b;transform:scaleX(1.1269);">Both cities share 4 out of 7 of their most important social segments (although not with the same order). These segments are related to food and drinks, and lgbtq culture.</div><div class="ti" style="left:53px;top:649.33px;font-size:10.6px;font-weight:normal;font-family:'Liberation Sans',sans-serif;color:#4b4b4b;transform:scaleX(1.1191);">Regarding the social segments which are different from one city to the other, while in Chicago Asian food and culture, whiskey business, and sweet treats are on the top 7 segments, in LA it is film lovers, fitness</div><div class="ti" style="left:53px;top:665.33px;font-size:10.6px;font-weight:normal;font-family:'Liberation Sans',sans-serif;color:#4b4b4b;transform:scaleX(1.1114);">fashion, and heartfelt sharing. This shows two very different cities in terms of social behavior patterns.</div><div style="position:absolute;left:36.6px;top:631.4px;width:2.4px;height:2.4px;border:1.05px solid #4a4a4a;border-radius:50%"></div><div style="position:absolute;left:36.6px;top:653.4px;width:2.4px;height:2.4px;border:1.05px solid #4a4a4a;border-radius:50%"></div></body></html>
